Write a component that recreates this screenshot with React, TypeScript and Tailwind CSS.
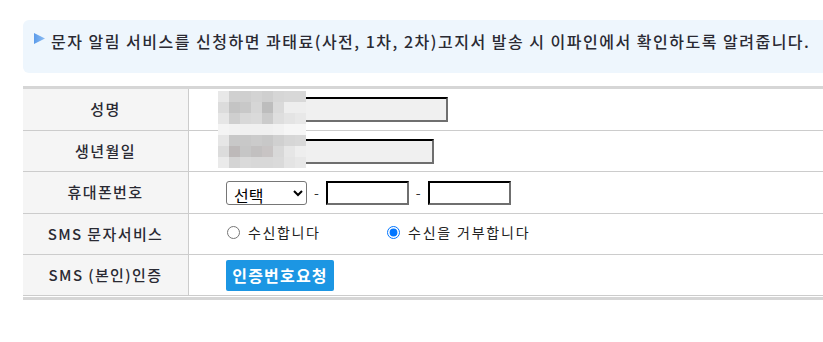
import React from "react";

const mosaic: string[][] = [
  ["bg-[#e8e8e8]", "bg-[#d0d0d0]", "bg-[#cfcfcf]", "bg-[#d3d3d3]", "bg-[#cfcfcf]", "bg-[#d6d6d6]", "bg-[#d8d8d8]", "bg-[#d8d8d8]"],
  ["bg-[#dcdcdc]", "bg-[#c4c4c4]", "bg-[#c8c8c8]", "bg-[#d6d6d6]", "bg-[#bdbdbd]", "bg-[#dadada]", "bg-[#eeeeee]", "bg-[#eeeeee]"],
  ["bg-[#e6e6e6]", "bg-[#cfcfcf]", "bg-[#d8d8d8]", "bg-[#dadada]", "bg-[#cbcbcb]", "bg-[#dedede]", "bg-[#e4e4e4]", "bg-[#e8e8e8]"],
  ["bg-[#f4f4f4]", "bg-[#f2f2f2]", "bg-[#f0f0f0]", "bg-[#f0f0f0]", "bg-[#f0f0f0]", "bg-[#f2f2f2]", "bg-[#f6f6f6]", "bg-[#f6f6f6]"],
  ["bg-[#e6e6e6]", "bg-[#c8c8c8]", "bg-[#c8c8c8]", "bg-[#cbcbcb]", "bg-[#c8c8c8]", "bg-[#d0d0d0]", "bg-[#d6d6d6]", "bg-[#d8d8d8]"],
  ["bg-[#dcdcdc]", "bg-[#bdb9b9]", "bg-[#c6c6c6]", "bg-[#c2c0c0]", "bg-[#c8c4c4]", "bg-[#d8d8d8]", "bg-[#e6e6e6]", "bg-[#eeeeee]"],
  ["bg-[#eaeaea]", "bg-[#d4d4d4]", "bg-[#dadada]", "bg-[#d8d8d8]", "bg-[#d8d8d8]", "bg-[#dadada]", "bg-[#e4e4e4]", "bg-[#e8e8e8]"],
];

const font = "font-['Noto_Sans_CJK_KR','Noto_Sans',sans-serif]";

function Row({ label, children, pad, h }: { label: string; children: React.ReactNode; pad: string; h: string }) {
  return (
    <div className={`flex ${h} border-b border-[#cccccc]`}>
      <div className="w-[166px] shrink-0 bg-[#f5f5f5] border-r border-[#cccccc] flex items-center justify-center text-[15px] tracking-[1.4px] font-medium text-[#2a2a33]">
        {label}
      </div>
      <div className={`flex-1 flex items-center ${pad}`}>{children}</div>
    </div>
  );
}

const insetInput =
  "h-[25px] bg-[#f0f0f0] border-2 border-t-black border-l-black border-r-[#6f6f6f] border-b-[#6f6f6f] outline-none";
const phoneInput =
  "h-[24px] w-[83px] bg-white border-2 border-t-black border-l-black border-r-[#6f6f6f] border-b-[#6f6f6f] outline-none";

export default function App() {
  return (
    <div className={`w-[823px] h-[342px] overflow-hidden bg-white relative ${font}`}>
      <div className="pl-[23px] pt-[20px] w-[850px]">
        <div className="h-[53px] rounded-[6px] bg-[#eef6fd] flex items-start pl-[11px] pt-[13px]">
          <svg width="11" height="11" viewBox="0 0 11 11" className="shrink-0">
            <defs>
              <linearGradient id="tri" x1="0" y1="0" x2="1" y2="0">
                <stop offset="0" stopColor="#5b9bea" />
                <stop offset="1" stopColor="#8cbcf2" />
              </linearGradient>
            </defs>
            <polygon points="0,0 11,5.5 0,11" fill="url(#tri)" />
          </svg>
          <span className="ml-[6px] text-[16px] leading-[18px] tracking-[1.5px] font-medium text-[#2a2a33] whitespace-nowrap -mt-[1px]">
            문자 알림 서비스를 신청하면 과태료(사전, 1차, 2차)고지서 발송 시 이파인에서 확인하도록 알려줍니다.
          </span>
        </div>

        <div className="mt-[13px] h-[3px] bg-[#d6d6d6]" />
        <div className="relative">
          <Row label="성명" pad="pl-[29px]" h="h-[42px]">
            <input readOnly className={`${insetInput} w-[230px]`} />
          </Row>
          <Row label="생년월일" pad="pl-[29px]" h="h-[41px]">
            <input readOnly className={`${insetInput} w-[216px]`} />
          </Row>
          <div className="absolute left-[195px] top-[2px] grid grid-cols-8">
            {mosaic.map((row, r) =>
              row.map((c, i) => <div key={`${r}-${i}`} className={`w-[11px] h-[11px] ${c}`} />)
            )}
          </div>
          <Row label="휴대폰번호" pad="pl-[37px]" h="h-[42px]">
            <select className="w-[81px] h-[24px] py-0 border border-[#767676] rounded-[3px] bg-white text-[16px] leading-[18px] pl-[3px] text-black">
              <option>선택</option>
            </select>
            <span className="mx-[7px] text-[14px] text-[#333]">-</span>
            <input className={phoneInput} />
            <span className="mx-[7px] text-[14px] text-[#333]">-</span>
            <input className={phoneInput} />
          </Row>
          <Row label="SMS 문자서비스" pad="pl-[38px] pb-[4px]" h="h-[41px]">
            <label className="flex items-center w-[160px] text-[14px] tracking-[1.6px] text-[#222]">
              <input type="radio" name="sms" className="m-0 w-[13px] h-[13px]" />
              <span className="ml-[8px]">수신합니다</span>
            </label>
            <label className="flex items-center text-[14px] tracking-[1.8px] text-[#222]">
              <input type="radio" name="sms" defaultChecked className="m-0 w-[13px] h-[13px]" />
              <span className="ml-[8px]">수신을 거부합니다</span>
            </label>
          </Row>
          <Row label="SMS (본인)인증" pad="pl-[37px]" h="h-[41px]">
            <button className="h-[31px] w-[108px] rounded-[2px] bg-[#1c96e3] text-white font-bold text-[16px] tracking-[1.2px] leading-[20px] flex items-center justify-center">
              인증번호요청
            </button>
          </Row>
        </div>
        <div className="mt-[1px] h-[3px] bg-[#d6d6d6]" />
      </div>
    </div>
  );
}
